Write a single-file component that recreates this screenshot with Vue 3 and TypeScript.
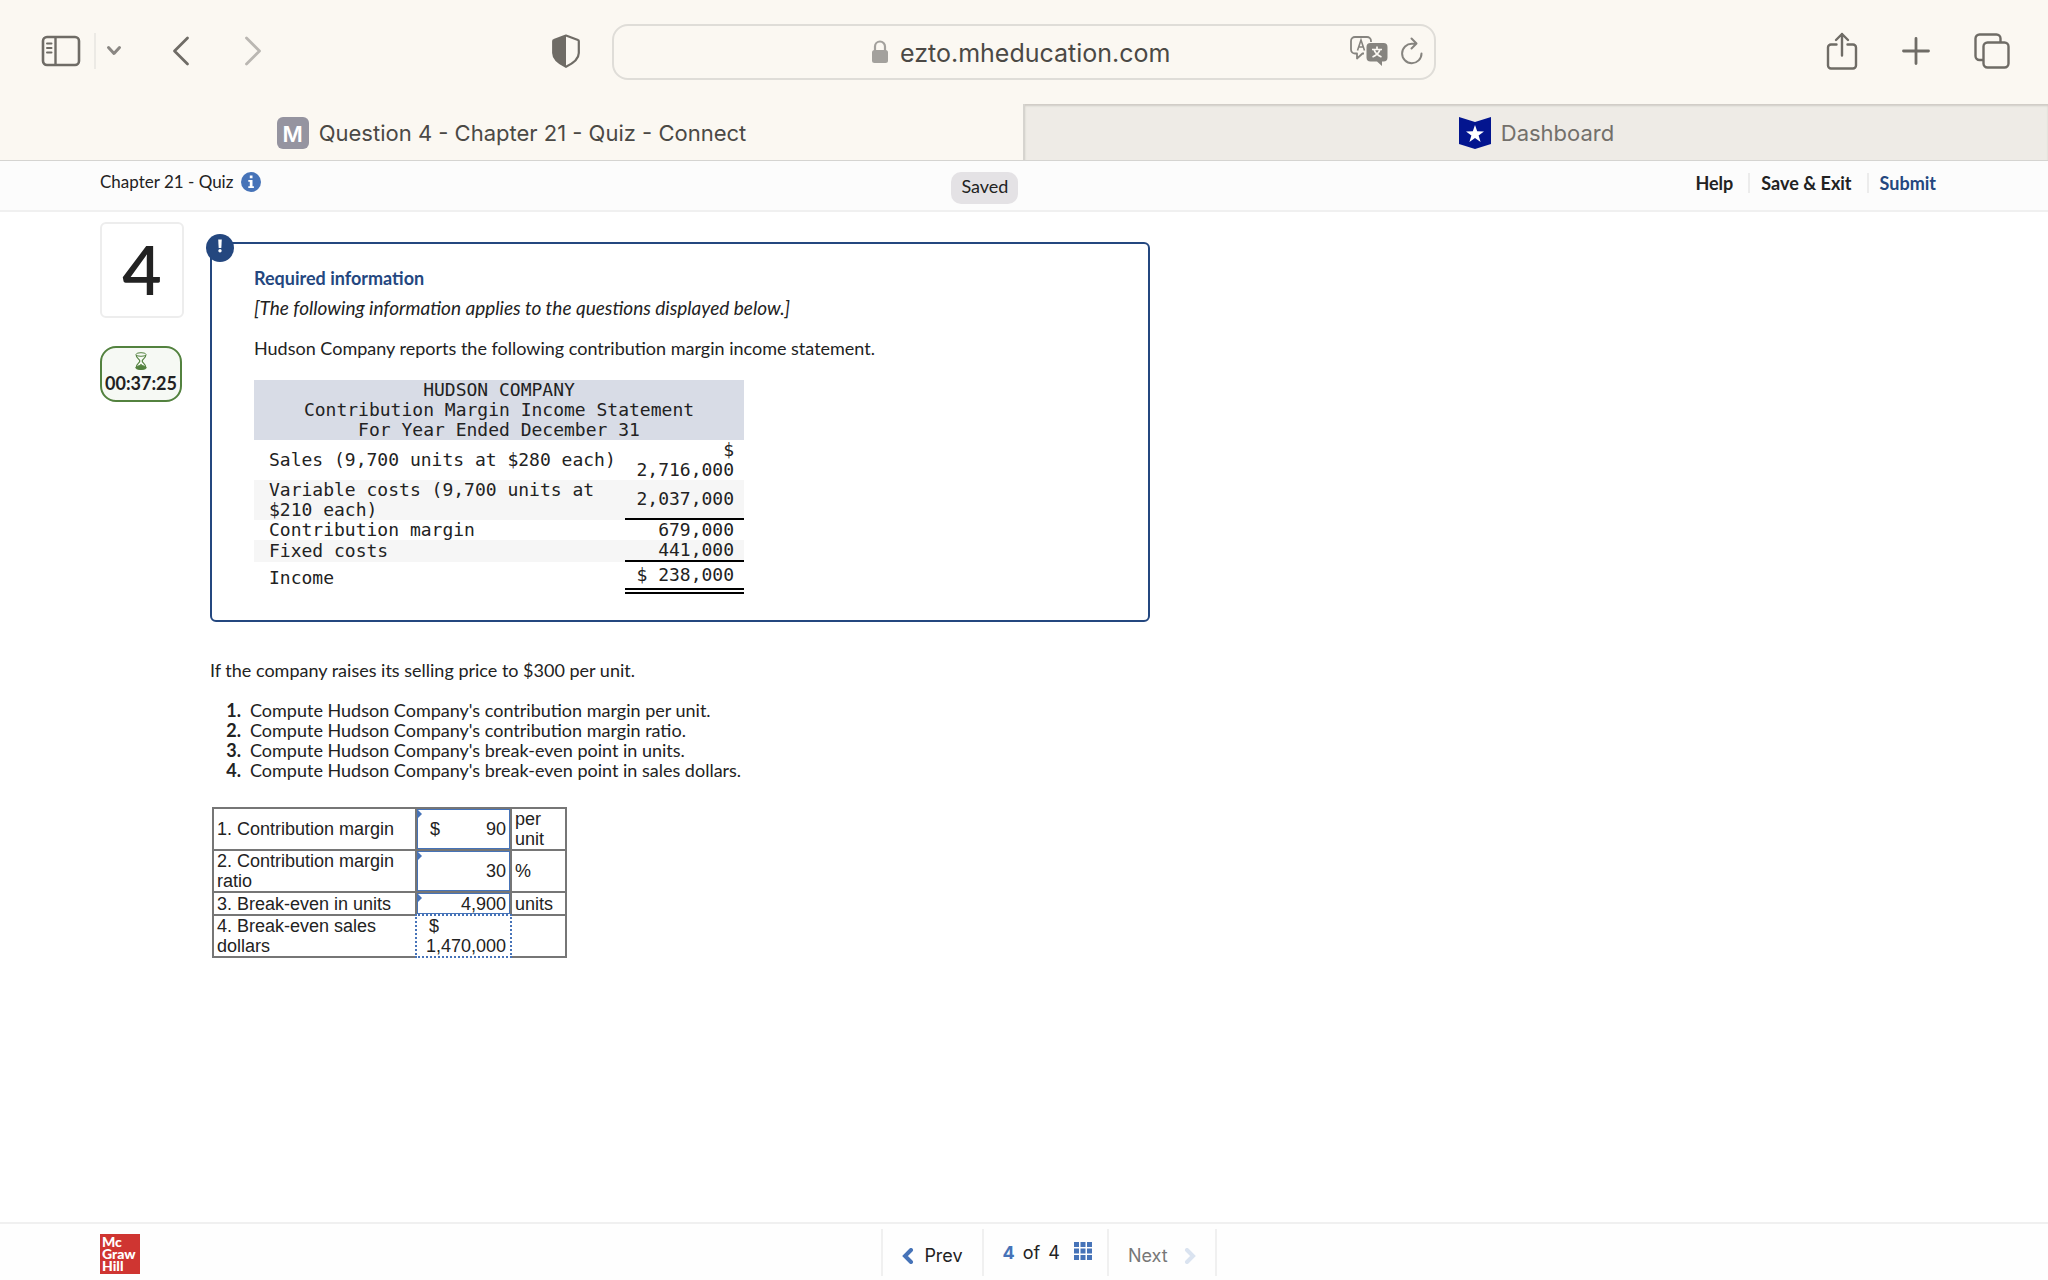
<script setup lang="ts">
import { ref } from 'vue'

interface StatementRow {
  label: string
  amount: string
  shaded?: boolean
  rule?: 'single' | 'double'
}

interface AnswerRow {
  id: string
  label: string
  prefix?: string
  value: string
  unit: string
  active?: boolean
}

const statement: StatementRow[] = [
  { label: 'Sales (9,700 units at $280 each)', amount: '$ 2,716,000' },
  { label: 'Variable costs (9,700 units at $210 each)', amount: '2,037,000', shaded: true, rule: 'single' },
  { label: 'Contribution margin', amount: '679,000' },
  { label: 'Fixed costs', amount: '441,000', shaded: true, rule: 'single' },
  { label: 'Income', amount: '$ 238,000', rule: 'double' },
]

const tasks: string[] = [
  "Compute Hudson Company's contribution margin per unit.",
  "Compute Hudson Company's contribution margin ratio.",
  "Compute Hudson Company's break-even point in units.",
  "Compute Hudson Company's break-even point in sales dollars.",
]

const answers = ref<AnswerRow[]>([
  { id: 'margin', label: '1. Contribution margin', prefix: '$', value: '90', unit: 'per unit' },
  { id: 'ratio', label: '2. Contribution margin ratio', value: '30', unit: '%' },
  { id: 'units', label: '3. Break-even in units', value: '4,900', unit: 'units' },
  { id: 'dollars', label: '4. Break-even sales dollars', prefix: '$', value: '1,470,000', unit: '', active: true },
])

const address = ref('ezto.mheducation.com')
</script>

<template>
  <div class="window">
    <div class="toolbar">
      <div class="tools-left">
        <button class="icon" aria-label="Sidebar">
          <svg width="40" height="32" viewBox="0 0 40 32" fill="none" stroke="#6f6c66">
            <rect x="2" y="2" width="36" height="28" rx="4" stroke-width="2.6" />
            <path d="M14.5 2v28" stroke-width="2.4" />
            <path d="M6 8.500h4.500M6 13h4.500M6 17.500h4.500" stroke-width="2" stroke-linecap="round" />
          </svg>
        </button>
        <span class="divider"></span>
        <button class="icon caret" aria-label="Tab groups">
          <svg width="16" height="12" viewBox="0 0 16 12" fill="none" stroke="#8a8783" stroke-width="3" stroke-linecap="round" stroke-linejoin="round">
            <path d="M2.500 2.500 8 8.500l5.500-6" />
          </svg>
        </button>
        <button class="icon back" aria-label="Back">
          <svg width="18" height="30" viewBox="0 0 18 30" fill="none" stroke="#6f6c66" stroke-width="2.800" stroke-linecap="round" stroke-linejoin="round">
            <path d="M15.500 2 2.500 15l13 13" />
          </svg>
        </button>
        <button class="icon forward" aria-label="Forward">
          <svg width="18" height="30" viewBox="0 0 18 30" fill="none" stroke="#bab7b2" stroke-width="2.800" stroke-linecap="round" stroke-linejoin="round">
            <path d="M2.500 2l13 13-13 13" />
          </svg>
        </button>
        <button class="icon shield" aria-label="Privacy report">
          <svg width="28" height="34" viewBox="0 0 28 34">
            <path d="M14 1.500 26 6c.6.200.8.600.8 1.200V19c0 6-5 10-12.800 13.800C6.200 29 1.200 25 1.200 19V7.200c0-.6.200-1 .8-1.200Z" fill="none" stroke="#6f6c66" stroke-width="2.200" stroke-linejoin="round" />
            <path d="M14 1.500 2 6c-.6.200-.8.600-.8 1.200V19c0 6 5 10 12.800 13.800Z" fill="#6f6c66" />
          </svg>
        </button>
      </div>
      <div class="address">
        <label class="site">
          <svg width="16" height="24" viewBox="0 0 16 24">
            <rect x="0" y="10" width="16" height="13" rx="2.500" fill="#a3a19d" />
            <path d="M3 11V6.500a5 5 0 0 1 10 0V11" fill="none" stroke="#a3a19d" stroke-width="2.200" />
          </svg>
          <input v-model="address" aria-label="Address" />
        </label>
        <div class="address-tools">
          <button class="icon" aria-label="Translate">
            <svg width="38" height="30" viewBox="0 0 38 30">
              <path d="M14 17.500h-1.500L7 22.500v-5H5a4 4 0 0 1-4-4V5a4 4 0 0 1 4-4h12a4 4 0 0 1 4 4v1" fill="none" stroke="#86847f" stroke-width="1.800" stroke-linejoin="round" />
              <path d="M7.500 14.500 11 4l3.500 10.500M8.700 11h4.600" fill="none" stroke="#86847f" stroke-width="1.600" />
              <path d="M20.500 7H33.500a4 4 0 0 1 4 4v10.500a4 4 0 0 1-4 4H32v4.500l-5-4.500h-6.500a4 4 0 0 1-4-4V11a4 4 0 0 1 4-4Z" fill="#86847f" />
              <path d="M22 13.500h10M27 10.500v3M30 13.500c-1 3.500-4 6-7.500 7.500M24 13.500c1 3.500 4 6 7.500 7.500" fill="none" stroke="#fbf8f2" stroke-width="1.700" />
            </svg>
          </button>
          <button class="icon" aria-label="Reload">
            <svg width="24" height="28" viewBox="0 0 24 28" fill="none" stroke="#86847f" stroke-width="2" stroke-linecap="round" stroke-linejoin="round">
              <path d="M21.500 16.500A9.700 9.700 0 1 1 12 6.800h4M11.500 1.500l5 5-5 5" />
            </svg>
          </button>
        </div>
      </div>
      <div class="tools-right">
        <button class="icon" aria-label="Share">
          <svg width="32" height="38" viewBox="0 0 32 38" fill="none" stroke="#6f6c66" stroke-width="2.400" stroke-linecap="round" stroke-linejoin="round">
            <path d="M10.500 12.500H5a3 3 0 0 0-3 3V33.500a3 3 0 0 0 3 3H27a3 3 0 0 0 3-3V15.500a3 3 0 0 0-3-3h-5.500M16 23.500V2M10 8l6-6 6 6" />
          </svg>
        </button>
        <button class="icon" aria-label="New tab">
          <svg width="28" height="28" viewBox="0 0 28 28" fill="none" stroke="#6f6c66" stroke-width="2.800" stroke-linecap="round">
            <path d="M14 1.500v25M1.500 14h25" />
          </svg>
        </button>
        <button class="icon" aria-label="Tab overview">
          <svg width="36" height="36" viewBox="0 0 36 36" fill="none" stroke="#6f6c66" stroke-width="2.400">
            <rect x="9.500" y="9.500" width="25" height="25" rx="4" />
            <path d="M9.500 27H5.500a4 4 0 0 1-4-4V5.500a4 4 0 0 1 4-4H22.500a4 4 0 0 1 4 4v4" />
          </svg>
        </button>
      </div>
    </div>

    <nav class="tabs">
      <a class="tab current" href="#question">
        <span class="favicon">M</span>
        <span>Question 4 - Chapter 21 - Quiz - Connect</span>
      </a>
      <a class="tab" href="#dashboard">
        <svg width="32" height="32" viewBox="0 0 32 32">
          <path d="M0 0 16 5 32 0v27l-16 5-16-5Z" fill="#03158f" />
          <path d="M16 8l2.200 6.300 6.800.1-5.400 4.100 2 6.500-5.600-3.900-5.600 3.900 2-6.500L7 14.400l6.800-.1Z" fill="#fff" />
        </svg>
        <span>Dashboard</span>
      </a>
    </nav>

    <header class="quiz-header">
      <div class="title">
        <span>Chapter 21 - Quiz</span>
        <button class="icon" aria-label="Quiz information">
          <svg width="20" height="20" viewBox="0 0 20 20">
            <circle cx="10" cy="10" r="10" fill="#4673b8" />
            <path d="M8.800 3.500h2.700v2.700H8.800ZM7.300 8h4.200v6.300h1.400V16H7.300v-1.700h1.500V9.700H7.300Z" fill="#fff" />
          </svg>
        </button>
      </div>
      <span class="saved">Saved</span>
      <div class="links">
        <a href="#help">Help</a>
        <a href="#exit">Save &amp; Exit</a>
        <a class="submit" href="#submit">Submit</a>
      </div>
    </header>

    <main class="content">
      <aside class="side">
        <div class="number">4</div>
        <div class="timer">
          <svg width="12" height="18" viewBox="0 0 12 18" fill="none" stroke="#53823f">
            <ellipse cx="6" cy="2.500" rx="5" ry="1.800" />
            <path d="M1.200 3c0 3.500 3.600 4 3.600 6S1.200 11.500 1.200 15.500M10.800 3c0 3.500-3.600 4-3.600 6s3.600 2.500 3.600 6.500" stroke-width="1.200" />
            <path d="M.8 15.800C1 14 4 14.500 6 12.500c2 2 5 1.500 5.200 3.300 0 1.200-2.400 1.700-5.200 1.700S.8 17 .8 15.800Z" fill="#53823f" />
          </svg>
          <span>00:37:25</span>
        </div>
      </aside>

      <div class="question">
        <section class="card">
          <span class="badge">
            <svg width="28" height="28" viewBox="0 0 28 28">
              <circle cx="14" cy="14" r="14" fill="#24477f" />
              <path d="M12.200 5.500h3.600l-.5 8.500h-2.600Z" fill="#fff" />
              <circle cx="14" cy="16.800" r="1.700" fill="#fff" />
            </svg>
          </span>
          <h2>Required information</h2>
          <p class="note">[The following information applies to the questions displayed below.]</p>
          <p class="intro">Hudson Company reports the following contribution margin income statement.</p>
          <table class="statement">
            <colgroup>
              <col />
              <col class="amount-col" />
            </colgroup>
            <thead>
              <tr>
                <th colspan="2">HUDSON COMPANY<br />Contribution Margin Income Statement<br />For Year Ended December 31</th>
              </tr>
            </thead>
            <tbody>
              <tr v-for="row in statement" :key="row.label" :class="{ shaded: row.shaded }">
                <td>{{ row.label }}</td>
                <td class="amount" :class="row.rule">{{ row.amount }}</td>
              </tr>
            </tbody>
          </table>
        </section>

        <p class="prompt">If the company raises its selling price to $300 per unit.</p>
        <ol class="tasks">
          <li v-for="(task, index) in tasks" :key="task"><b>{{ index + 1 }}.</b>{{ task }}</li>
        </ol>

        <table class="answers">
          <colgroup>
            <col class="label-col" />
            <col class="value-col" />
            <col />
          </colgroup>
          <tbody>
            <tr v-for="row in answers" :key="row.id">
              <th scope="row"><label :for="row.id">{{ row.label }}</label></th>
              <td class="value" :class="{ active: row.active }">
                <div class="field">
                  <span v-if="row.prefix" class="prefix">{{ row.prefix }}</span>
                  <input :id="row.id" v-model="row.value" type="text" />
                </div>
              </td>
              <td class="unit">{{ row.unit }}</td>
            </tr>
          </tbody>
        </table>
      </div>
    </main>

    <footer class="footer">
      <div class="logo">Mc<br />Graw<br />Hill</div>
      <nav class="pager">
        <button class="prev">
          <svg width="12" height="16" viewBox="0 0 12 16" fill="none" stroke="#4673b8" stroke-width="4" stroke-linecap="round">
            <path d="M9 2 3 8l6 6" />
          </svg>
          Prev
        </button>
        <div class="position">
          <b>4</b>
          <span>of</span>
          <span>4</span>
          <button class="icon grid" aria-label="Question list">
            <svg width="18" height="18" viewBox="0 0 18 18" fill="#4673b8">
              <path d="M0 0h5v5H0ZM6.500 0h5v5h-5ZM13 0h5v5h-5ZM0 6.500h5v5H0ZM6.500 6.500h5v5h-5ZM13 6.500h5v5h-5ZM0 13h5v5H0ZM6.500 13h5v5h-5ZM13 13h5v5h-5Z" />
            </svg>
          </button>
        </div>
        <button class="next" disabled>
          Next
          <svg width="12" height="16" viewBox="0 0 12 16" fill="none" stroke="#dae3f0" stroke-width="4" stroke-linecap="round">
            <path d="M3 2l6 6-6 6" />
          </svg>
        </button>
      </nav>
    </footer>
  </div>
</template>

<style>
body {
  margin: 0;
  background: #fff;
}
</style>

<style scoped>
* {
  box-sizing: border-box;
}

.window {
  display: flex;
  flex-direction: column;
  min-height: 100vh;
  color: #222;
  font: 18px/20px Lato, sans-serif;
}

button {
  padding: 0;
  border: 0;
  background: none;
  color: inherit;
  font: inherit;
}

input {
  min-width: 0;
  padding: 0;
  border: 0;
  background: none;
  color: inherit;
  font: inherit;
  outline: 0;
}

a {
  color: inherit;
  text-decoration: none;
}

svg {
  display: block;
  flex: none;
}

.toolbar {
  display: grid;
  grid-template-columns: 1fr minmax(0, 824px) 1fr;
  align-items: center;
  height: 104px;
  background: #fbf8f2;
}

.tools-left {
  display: flex;
  align-items: center;
  padding: 0 32px 2px 41px;
}

.divider {
  width: 2px;
  height: 36px;
  margin-left: 13px;
  background: #eceae5;
}

.caret {
  margin-left: 10px;
}

.back {
  margin-left: 50px;
}

.forward {
  margin-left: 54px;
}

.shield {
  margin-left: auto;
}

.address {
  display: flex;
  align-items: center;
  justify-content: center;
  position: relative;
  height: 56px;
  border: 2px solid #dfddd8;
  border-radius: 16px;
}

.site {
  display: flex;
  align-items: center;
  gap: 12px;
  color: #4b4945;
  font: 25px/32px Inter, sans-serif;
}

.site input {
  width: 276px;
  padding-top: 2px;
}

.address-tools {
  display: flex;
  align-items: center;
  gap: 12px;
  position: absolute;
  right: 10px;
  padding-bottom: 2px;
}

.tools-right {
  display: flex;
  align-items: center;
  justify-content: flex-end;
  gap: 44px;
  padding: 0 38px 2px 0;
}

.tabs {
  display: flex;
  height: 57px;
  border-bottom: 1px solid #d5d4d1;
  background: #fbf8f2;
  font: 22px/28px Inter, sans-serif;
}

.tab {
  display: flex;
  flex: 1;
  align-items: center;
  justify-content: center;
  gap: 10px;
  padding-top: 2px;
  border-left: 2px solid #d6d4cf;
  background: #eeebe6;
  box-shadow: inset 0 2px 2px #cfccc6;
  color: #73706b;
}

.tab.current {
  border-left: 0;
  background: none;
  box-shadow: none;
  color: #4b4945;
}

.favicon {
  width: 32px;
  height: 32px;
  border-radius: 6px;
  background: #9594a0;
  color: #fff;
  font: 600 22px/34px Inter, sans-serif;
  text-align: center;
}

.quiz-header {
  display: grid;
  grid-template-columns: 850fr auto 916fr;
  align-items: start;
  height: 51px;
  padding: 11px 112px 0 100px;
  border-bottom: 2px solid #f0f0f0;
  background: #fcfcfc;
}

.title {
  display: flex;
  align-items: center;
  gap: 8px;
  font-size: 17px;
}

.saved {
  padding: 4px 10px 8px;
  border-radius: 10px;
  background: #e4e2e5;
}

.links {
  display: flex;
  justify-content: flex-end;
  padding-top: 1px;
  font-weight: 700;
}

.links a + a {
  margin-left: 15px;
  padding-left: 11px;
  border-left: 2px solid #ececec;
}

.submit {
  color: #24477f;
}

.content {
  display: flex;
  flex: 1;
  align-items: flex-start;
  gap: 26px;
  padding: 10px 100px 40px;
}

.number {
  width: 84px;
  height: 96px;
  border: 2px solid #ededed;
  border-radius: 6px;
  font-size: 68px;
  font-weight: 600;
  line-height: 90px;
  text-align: center;
}

.timer {
  display: flex;
  flex-direction: column;
  align-items: center;
  gap: 3px;
  width: 82px;
  height: 56px;
  margin-top: 28px;
  padding-top: 4px;
  border: 2px solid #53823f;
  border-radius: 16px;
  background: #f6f9f4;
  font-weight: 700;
}

.question {
  flex: 1;
  padding-top: 20px;
}

.card {
  position: relative;
  max-width: 940px;
  padding: 24px 42px 26px;
  border: 2px solid #24477f;
  border-radius: 6px;
}

.badge {
  position: absolute;
  top: -10px;
  left: -6px;
}

h2 {
  margin: 0;
  color: #24477f;
  font-size: 18px;
  line-height: 20px;
}

p {
  margin: 0;
}

.note {
  margin-top: 10px;
  font-size: 19px;
  font-style: italic;
}

.intro {
  margin-top: 20px;
}

.statement {
  width: 490px;
  margin-top: 22px;
  border-collapse: separate;
  border-spacing: 0;
  table-layout: fixed;
  font: 18px/20px "DejaVu Sans Mono", monospace;
}

.statement th {
  padding: 0;
  background: #d8dce6;
  font-weight: 400;
}

.statement td {
  padding: 0 0 0 15px;
}

.amount-col {
  width: 119px;
}

.statement .amount {
  padding: 0 10px;
  text-align: right;
}

.statement .single {
  border-bottom: 2px solid #000;
}

.statement .double {
  padding: 3px 10px;
  border-bottom: 6px double #000;
}

.shaded {
  background: #f6f6f6;
}

.prompt {
  margin-top: 38px;
}

.tasks {
  margin: 20px 0 0;
  padding: 0;
  list-style: none;
}

.tasks li {
  display: flex;
  gap: 9px;
}

.tasks b {
  width: 31px;
  text-align: right;
}

.answers {
  width: 355px;
  margin: 27px 0 0 2px;
  border-collapse: collapse;
  table-layout: fixed;
  font: 18px/20px "Liberation Sans", Arial, sans-serif;
}

.answers th,
.answers td {
  padding: 0 3px;
  border: 2px solid #767676;
  font-weight: 400;
  text-align: left;
}

.label-col {
  width: 203px;
}

.value-col {
  width: 95px;
}

.answers .value {
  position: relative;
  height: 23px;
  padding: 0;
}

.field {
  display: flex;
  align-items: center;
  position: absolute;
  inset: 0;
  padding: 0 3px 0 12px;
  border: 1px solid #4673b8;
}

.field::before {
  content: "";
  position: absolute;
  top: 0;
  left: 0;
  border: 4px solid transparent;
  border-left-color: #4673b8;
  border-right-width: 0;
}

.field input {
  flex: 1;
  height: 20px;
  text-align: right;
}

.active .field {
  flex-direction: column;
  align-items: stretch;
  justify-content: center;
  inset: -2px;
  padding: 0 4px 0 8px;
  border: 2px dotted #4673b8;
  background: #fff;
}

.active .field::before {
  display: none;
}

.active .field .prefix {
  padding-left: 4px;
}

.active .field input {
  flex: none;
}

.footer {
  display: grid;
  grid-template-columns: 781fr auto 719fr;
  align-items: start;
  height: 58px;
  padding: 0 112px 0 100px;
  border-top: 2px solid #f0f0f0;
  background: #fefefe;
}

.logo {
  width: 40px;
  height: 40px;
  margin-top: 10px;
  padding: 2px;
  background: #cf3531;
  color: #fff;
  font: 900 14px/12px Lato, sans-serif;
}

.pager {
  display: flex;
  height: 47px;
  margin-top: 5px;
  border-right: 2px solid #f0f0f0;
  font: 18px/20px Inter, sans-serif;
}

.pager > * {
  display: flex;
  align-items: center;
  border-left: 2px solid #f0f0f0;
}

.prev {
  gap: 10px;
  padding: 6px 19px 0;
}

.position {
  gap: 8px;
  padding: 0 15px 0 19px;
}

.position b {
  color: #4673b8;
}

.grid {
  padding: 0 0 4px 6px;
}

.next {
  gap: 16px;
  padding: 6px 19px 0;
  color: #777;
}
</style>
